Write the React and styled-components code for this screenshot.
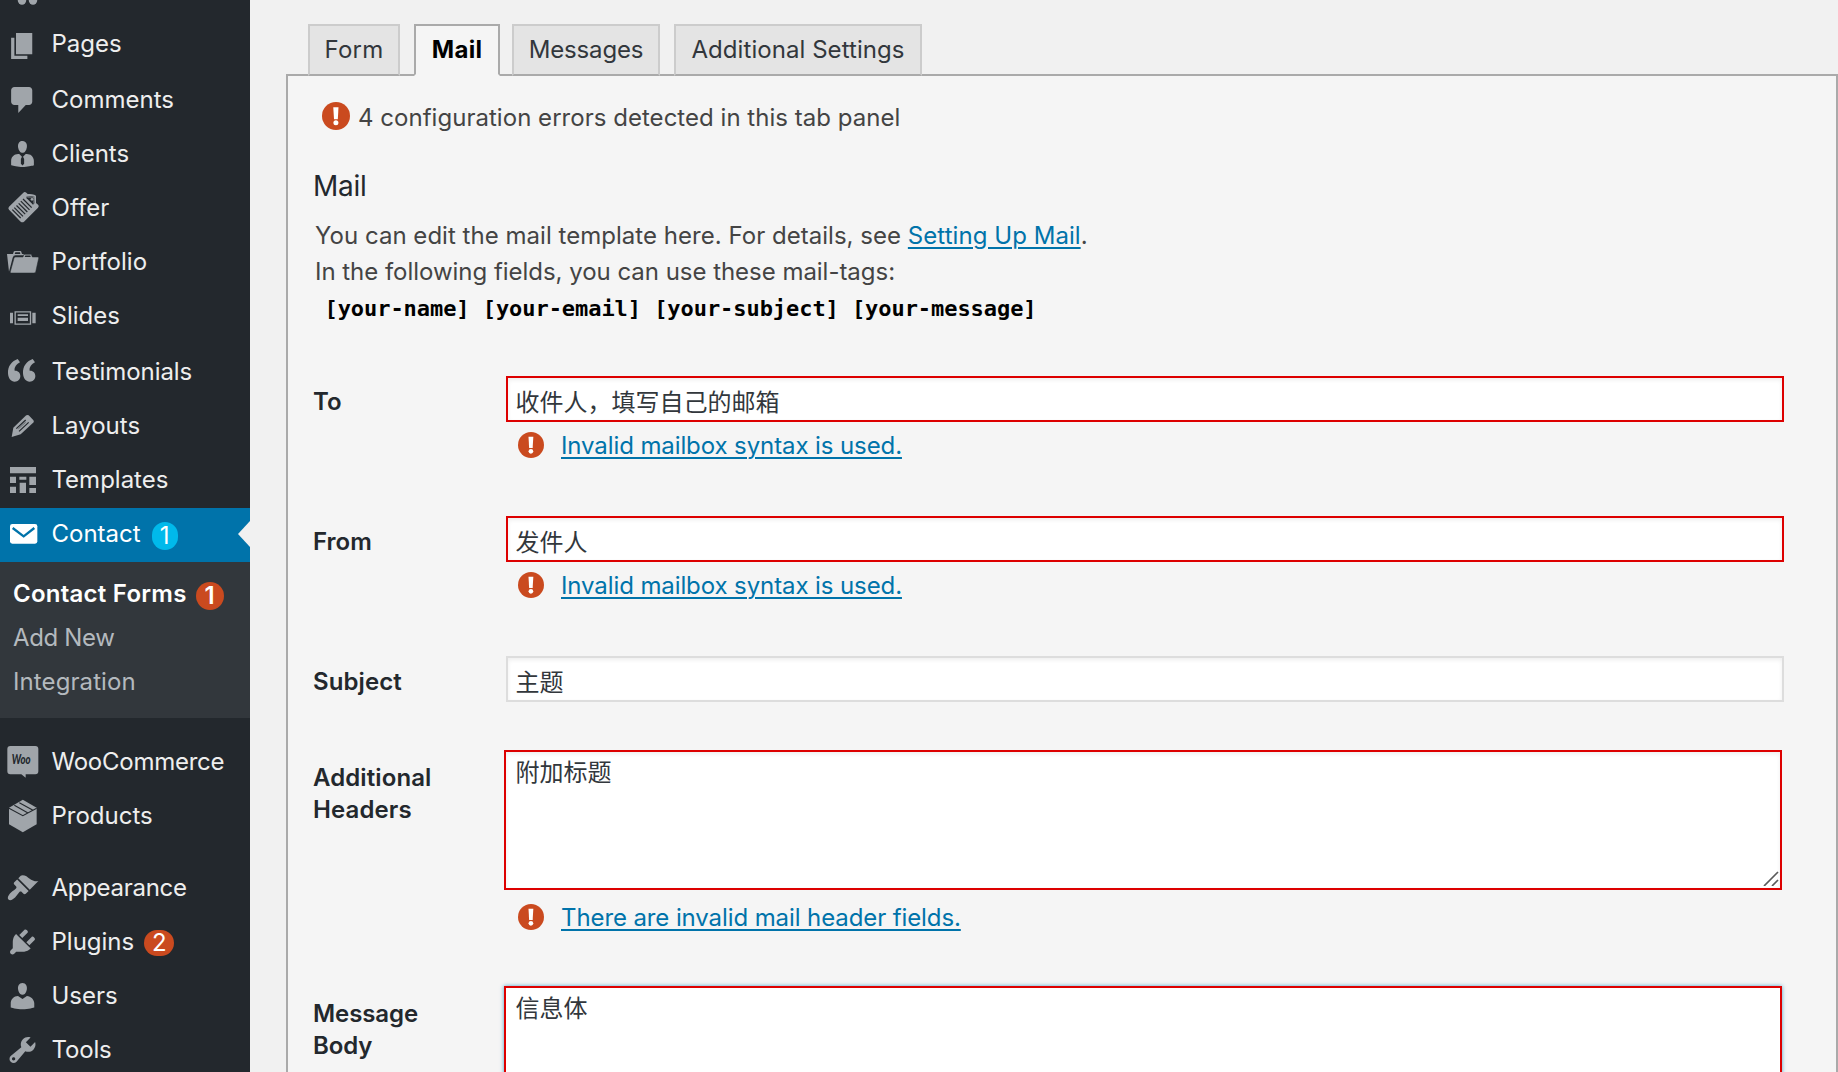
import React from "react";
import styled, { createGlobalStyle, css } from "styled-components";

const GlobalStyle = createGlobalStyle`
  *, *::before, *::after { box-sizing: border-box; }
  html, body { margin: 0; padding: 0; }
  body {
    background: #f1f1f1;
    color: #444;
    font-family: Inter, "Noto Sans CJK SC", sans-serif;
    font-size: 24px;
  }
`;

const Screen = styled.div`
  display: flex;
  width: 1838px;
  height: 1072px;
  overflow: hidden;
  background: #f1f1f1;
`;

/* ---------- sidebar ---------- */

const Sidebar = styled.nav`
  flex: none;
  width: 250px;
  background: #23282d;
  display: flex;
  flex-direction: column;
`;

const ClippedRow = styled.div`
  flex: none;
  display: flex;
  align-items: flex-end;
  height: 18px;
  padding: 0 0 11px 5px;
  overflow: hidden;
  color: #a0a5aa;
`;

const MenuRow = styled.a`
  position: relative;
  flex: none;
  display: flex;
  align-items: flex-start;
  height: ${(p) => (p.$tall ? 56 : 54)}px;
  padding-left: 5px;
  background: ${(p) => (p.$active ? "#0073aa" : "transparent")};
  color: ${(p) => (p.$active ? "#fff" : "#a0a5aa")};
  text-decoration: none;
`;

const MenuIcon = styled.svg`
  flex: none;
  display: block;
  width: 34px;
  height: 34px;
  margin-top: ${(p) => (p.$tall ? 11 : 9)}px;
  overflow: visible;
`;

const MenuText = styled.span`
  margin-left: 12.5px;
  line-height: 51px;
  color: ${(p) => (p.$active ? "#fff" : "#eee")};
  letter-spacing: ${(p) => p.$track || 0}px;
`;

const Badge = styled.span`
  flex: none;
  display: flex;
  align-items: center;
  justify-content: center;
  width: ${(p) => p.$w}px;
  height: ${(p) => p.$h}px;
  margin: ${(p) => p.$top}px 0 0 ${(p) => p.$left}px;
  border-radius: 14px;
  background: ${(p) => (p.$blue ? "#00b9eb" : "#ca4a1f")};
  color: #fff;
  font-weight: ${(p) => (p.$bold ? 600 : 400)};
  line-height: 26px;
`;

const ActiveArrow = styled.span`
  position: absolute;
  right: 0;
  top: 13px;
  border: 13.5px solid transparent;
  border-left-width: 0;
  border-right: 12.5px solid #f1f1f1;
`;

const Submenu = styled.div`
  flex: none;
  display: flex;
  flex-direction: column;
  height: 156px;
  padding: 10px 0 0 13px;
  background: #32373c;
`;

const SubmenuRow = styled.a`
  display: flex;
  height: 44px;
  line-height: 44px;
  color: ${(p) => (p.$current ? "#fff" : "#b4b9be")};
  font-weight: ${(p) => (p.$current ? 600 : 400)};
  letter-spacing: ${(p) => p.$track || 0}px;
`;

const MenuGap = styled.div`
  flex: none;
  height: 18px;
`;

/* ---------- content ---------- */

const Content = styled.main`
  flex: 1;
  display: flex;
  flex-direction: column;
  padding: 24px 0 0 36px;
`;

const Tabs = styled.div`
  position: relative;
  z-index: 1;
  flex: none;
  display: flex;
  height: 52px;
  margin: 0 0 -2px 22px;
`;

const activeTab = css`
  background: #f5f5f5;
  border-color: #aaa #aaa #f5f5f5;
  color: #000;
  font-weight: 700;
`;

const Tab = styled.a`
  display: flex;
  justify-content: center;
  width: ${(p) => p.$width}px;
  margin-right: ${(p) => p.$gap}px;
  border: 2px solid #ccc;
  border-bottom-color: #aaa;
  background: #e4e4e4;
  color: #32373c;
  line-height: 47px;
  letter-spacing: ${(p) => p.$track || 0}px;
  ${(p) => p.$active && activeTab}
`;

const Panel = styled.section`
  flex: none;
  display: flex;
  flex-direction: column;
  height: 1100px;
  padding-left: 25px;
  border: 2px solid #aaa;
  background: #f5f5f5;
`;

const PanelNotice = styled.div`
  display: flex;
  align-items: center;
  gap: 8px;
  height: 28px;
  margin: 26px 0 0 9px;
  color: #444;
`;

const NoticeText = styled.span`
  padding-top: 4px;
  line-height: 28px;
  letter-spacing: 0.03px;
`;

const BangSvg = styled.svg`
  flex: none;
  display: block;
  width: ${(p) => p.$size}px;
  height: ${(p) => p.$size}px;
`;

const Heading = styled.h2`
  margin: 36px 0 0;
  height: 40px;
  line-height: 40px;
  font-size: 28px;
  font-weight: 400;
  letter-spacing: -0.3px;
  color: #23282d;
`;

const Legend = styled.div`
  display: flex;
  flex-direction: column;
  margin-top: 12px;
  padding-left: 2px;
`;

const LegendLine = styled.p`
  margin: 0;
  height: 36px;
  line-height: 36px;
  white-space: pre;
  letter-spacing: ${(p) => p.$track || 0}px;
`;

const Link = styled.a`
  color: #0073aa;
  text-decoration: underline;
  text-decoration-thickness: 2px;
  text-underline-offset: 3px;
  letter-spacing: ${(p) => p.$track || 0}px;
`;

const Tags = styled.div`
  display: flex;
  height: 36px;
  margin-top: 1px;
  padding-left: 9.5px;
  gap: 13.2px;
  color: #000;
  font-family: "DejaVu Sans Mono", monospace;
  font-weight: 700;
  font-size: 22px;
  line-height: 36px;
  letter-spacing: -0.06px;
`;

const Fields = styled.div`
  display: flex;
  flex-direction: column;
  margin-top: 49px;
`;

const FieldRow = styled.div`
  display: grid;
  grid-template-columns: ${(p) => (p.$area ? 191 : 193)}px 1278px;
  align-items: start;
  height: ${(p) => p.$height}px;
`;

const FieldLabel = styled.label`
  padding-top: ${(p) => (p.$area ? 12 : 10)}px;
  color: #23282d;
  font-weight: 600;
  line-height: 32.3px;
  white-space: pre-line;
  letter-spacing: ${(p) => p.$track || 0}px;
`;

const FieldBody = styled.div`
  position: relative;
  display: flex;
  flex-direction: column;
`;

const controlBase = css`
  display: block;
  width: 1278px;
  margin: 0;
  border: 2px solid ${(p) => (p.$invalid ? "#dd0000" : "#ddd")};
  border-radius: 0;
  outline: none;
  background: #fff;
  color: #32373c;
  font-family: Inter, "Noto Sans CJK SC", sans-serif;
  font-size: 24px;
`;

const Input = styled.input`
  ${controlBase}
  height: 46px;
  padding: 2px 7.5px 0;
  box-shadow: inset 0 2px 4px rgba(0, 0, 0, 0.07);
`;

const TextArea = styled.textarea`
  ${controlBase}
  height: ${(p) => p.$height}px;
  padding: 4px 9.5px;
  line-height: 34px;
  resize: none;
  box-shadow: ${(p) =>
    p.$focused ? "0 0 4px rgba(30, 140, 190, 0.8)" : "inset 0 2px 4px rgba(0, 0, 0, 0.07)"};
`;

const Grip = styled.svg`
  position: absolute;
  right: 3px;
  top: 120px;
  width: 16px;
  height: 16px;
`;

const FieldError = styled.div`
  display: flex;
  align-items: center;
  gap: 17px;
  height: 36px;
  margin-top: ${(p) => (p.$area ? 9 : 5)}px;
  padding-left: ${(p) => (p.$area ? 14 : 12)}px;
`;

/* ---------- icons ---------- */

const DASH = "-0.77 -0.46 20.92 20.92";
const CUT = "#23282d";

const icons = {
  pages: { box: DASH, art: <path d="M6 15V2h10v13H6zm-1 1h8v2H3V5h2v11z" /> },
  comments: {
    box: DASH,
    art: <path d="M5 2h9c1.1 0 2 .9 2 2v7c0 1.1-.9 2-2 2h-2l-4.6 5v-5H5c-1.1 0-2-.9-2-2V4c0-1.1.9-2 2-2z" />,
  },
  clients: {
    box: DASH,
    art: (
      <path d="M7.3 6l-.03-.19c-.04-.37-.05-.73-.03-1.08.02-.36.1-.71.25-1.04.14-.32.31-.61.52-.86s.49-.46.83-.6c.34-.15.72-.23 1.13-.23.69 0 1.26.2 1.71.59s.76.87.91 1.44.18 1.16.09 1.78l-.03.19c-.01.09-.05.25-.11.48-.05.24-.12.47-.2.69-.08.21-.19.45-.34.72-.14.27-.3.49-.47.69-.18.19-.4.34-.67.48-.27.13-.55.19-.86.19s-.59-.06-.87-.19c-.26-.13-.49-.29-.67-.5-.18-.2-.34-.42-.49-.66-.15-.25-.26-.49-.34-.73-.09-.25-.16-.47-.21-.67-.06-.21-.1-.37-.12-.5zm9.2 6.24c.41.7.5 1.41.5 2.14v2.49c0 .03-.12.08-.29.13-.18.04-.42.13-.97.27-.55.12-1.1.24-1.65.34s-1.19.19-1.95.27c-.75.08-1.46.12-2.13.12-.68 0-1.39-.04-2.14-.12-.75-.07-1.4-.17-1.98-.27-.58-.11-1.08-.23-1.56-.34-.49-.11-.8-.21-1.06-.29L3 16.87v-2.49c0-.75.07-1.46.46-2.15s.81-1.25 1.5-1.68C5.66 10.12 7.19 10 8 10l1.67 1.67L9 13v3l1.02 1.08L11 16v-3l-.68-1.33L11.97 10c.77 0 2.2.07 2.9.52.71.45 1.21 1.02 1.63 1.72z" />
    ),
  },
  offer: {
    box: "15 573 102 102",
    art: (
      <>
        <path
          d="M70 578 Q74 574 79 578 L83 582 C90 582 102 583 108 587 L108 609 L115 615 Q118 619 114 623 L72 665 Q67 669 62 665 L27 629 Q23 624 27 620 Z"
          fill="currentColor"
        />
        <g stroke={CUT} strokeWidth="3.8" fill="none">
          <path d="M69 597 L95 623" />
          <path d="M62.500 603.500 L88.500 629.500" />
          <path d="M56 610 L82 636" />
          <path d="M49.500 616.500 L75.500 642.500" />
          <path d="M43 623 L69 649" />
          <path d="M37 629 L62 654" />
        </g>
        <path d="M79 590 C88 587 99 587 103 590 L104 609 L99 614 L80 595 Z" fill={CUT} />
        <path d="M82 591 L102 591 L102 611" stroke="currentColor" strokeWidth="2.500" fill="none" />
        <circle cx="96" cy="598" r="4" fill="currentColor" />
      </>
    ),
  },
  portfolio: {
    box: "15 735 102 102",
    art: (
      <>
        <path d="M21 762 H39 L41 755 Q42 753 45 753 H61 Q64 753 64 756 L66 762 H71 L71 766 H47 Q40 766 38 773 L27 815 Z" />
        <path d="M44 762 L46 757 H60 L61 762 Z" fill={CUT} />
        <path d="M47 771 H69 L71 765 Q72 763 75 763 H92 Q95 763 95 766 L97 771 H113 Q117 771 116 775 L107 816 Q106 819 102 819 H34 Q29 819 31 815 L42 775 Q43 771 47 771 Z" stroke={CUT} strokeWidth="1.5" />
        <path d="M74 771 L76 766.5 H91 L92 771 Z" fill={CUT} />
      </>
    ),
  },
  slides: {
    box: "15 63 102 102",
    art: (
      <>
        <path d="M30 98h9v32h-9zM97 98h10v32H97z" />
        <path d="M45.500 95.500h46v37h-46z" fill="none" stroke="currentColor" strokeWidth="4" />
        <path d="M53 103h31v5H53zM53 113h31v10H53z" />
      </>
    ),
  },
  quote: {
    box: "15 225 102 102",
    art: (
      <>
        <path d="M53 237 C36 243 23 258 24 280 C25 296 33 305 44 305 C54 305 61 298 61 288 C61 278 54 271 44 272 C42 262 50 252 60 247 Z" />
        <path d="M98 237 C81 243 68 258 69 280 C70 296 78 305 89 305 C99 305 106 298 106 288 C106 278 99 271 89 272 C87 262 95 252 105 247 Z" />
      </>
    ),
  },
  pencil: {
    box: "15 387 102 102",
    art: (
      <>
        <path d="M77 407 Q81 403 86 406 L99 419 Q103 423 101 427 L62 463 L35 471 L40 443 Z" />
        <path d="M49 446 L77 420 M57 454 L86 427" stroke={CUT} strokeWidth="3.600" />
        <path d="M55 446.500 L77 426.500" stroke={CUT} strokeWidth="1.500" />
      </>
    ),
  },
  templates: {
    box: "15 549 102 102",
    art: (
      <path d="M30 561h78v19H30zM30 590h18v19H30zM58 590h21v9H58zM88 590h20v25H88zM30 620h18v19H30zM59 608h19v31H59zM88 624h20v15H88z" />
    ),
  },
  mail: {
    box: "15 711 102 102",
    art: (
      <>
        <rect x="30" y="732" width="82" height="59" rx="7" />
        <path d="M38 744 L71 769 L103 744" fill="none" stroke="#0073aa" strokeWidth="7" strokeLinejoin="miter" />
      </>
    ),
  },
  woo: {
    box: "15 735 102 102",
    art: (
      <>
        <path d="M31 738 H106 Q115 738 115 747 V814 Q115 823 106 823 H77 V833 L64 823 H31 Q22 823 22 814 V747 Q22 738 31 738 Z" />
        <text
          transform="translate(35 793) scale(0.78 1)"
          fill={CUT}
          fontFamily="Lato, sans-serif"
          fontWeight="900"
          fontStyle="italic"
          fontSize="37"
        >
          Woo
        </text>
      </>
    ),
  },
  products: {
    box: "15 51 102 102",
    art: (
      <>
        <path d="M68.500 53 L110 77 V127 L68.500 151 L27 127 V77 Z" />
        <path d="M27 79 L68.500 101 L110 79 M43 70 L84 93 M58 62 L99 85" fill="none" stroke={CUT} strokeWidth="3.2" />
      </>
    ),
  },
  appearance: {
    box: DASH,
    art: (
      <path d="M14.48 11.06L7.41 3.99l1.5-1.5c.5-.56 2.3-.47 3.51.32 1.21.8 1.43 1.28 2.91 2.1 1.18.64 2.45 1.26 4.45.85zm-.71.71L6.7 4.7 4.93 6.47c-.39.39-.39 1.02 0 1.41l1.06 1.06c.39.39.39 1.03 0 1.42-.6.6-1.43 1.11-2.21 1.69-.35.26-.7.53-1.01.84C1.43 14.23.4 16.08 1.4 17.07c.99 1 2.84-.03 4.18-1.36.31-.31.58-.66.85-1.02.57-.78 1.08-1.61 1.69-2.21.39-.39 1.02-.39 1.41 0l1.06 1.06c.39.39 1.02.39 1.41 0z" />
    ),
  },
  plugins: {
    box: DASH,
    art: (
      <path d="M13.11 4.36L9.87 7.6 8 5.73l3.24-3.24c.35-.34 1.05-.2 1.56.32.52.51.66 1.21.31 1.55zm-8 1.77l.91-1.12 9.01 9.01-1.19.84c-.71.71-2.63 1.16-3.82 1.16H6.14L4.9 17.26c-.59.59-1.54.59-2.12 0-.59-.58-.59-1.53 0-2.12l1.24-1.24v-3.88c0-1.13.4-3.19 1.09-3.89zm7.26 3.97l3.24-3.24c.34-.35 1.04-.21 1.55.31.52.51.66 1.21.31 1.55l-3.24 3.25z" />
    ),
  },
  users: {
    box: DASH,
    art: (
      <path d="M10 9.25c-2.27 0-2.73-3.44-2.73-3.44C7 4.02 7.82 2 9.97 2c2.16 0 2.98 2.02 2.71 3.81 0 0-.41 3.44-2.68 3.44zm0 2.57L12.72 10c2.39 0 4.52 2.33 4.52 4.53v2.49s-3.65 1.13-7.24 1.13c-3.65 0-7.24-1.13-7.24-1.13v-2.49c0-2.25 1.94-4.48 4.47-4.48z" />
    ),
  },
  tools: {
    box: DASH,
    art: (
      <path d="M16.68 9.77c-1.34 1.34-3.3 1.67-4.95.99l-5.41 6.52c-.99.99-2.59.99-3.58 0s-.99-2.59 0-3.57l6.52-5.42c-.68-1.65-.35-3.61.99-4.95 1.28-1.28 3.12-1.62 4.72-1.06l-2.89 2.89 2.82 2.82 2.86-2.87c.53 1.58.18 3.39-1.08 4.65zM3.81 16.21c.4.39 1.04.39 1.43 0 .4-.4.4-1.04 0-1.43-.39-.4-1.03-.4-1.43 0-.39.39-.39 1.03 0 1.43z" />
    ),
  },
};

function Icon({ name, tall }) {
  const { box, art } = icons[name];
  return (
    <MenuIcon viewBox={box} $tall={tall} fill="currentColor" aria-hidden="true">
      {art}
    </MenuIcon>
  );
}

function Bang({ size }) {
  return (
    <BangSvg $size={size} viewBox="0 0 28 28" aria-hidden="true">
      <circle cx="14" cy="14" r="14" fill="#ca4a1f" />
      <path d="M11.300 5.200 h5.200 l-.7 12 h-3.800 z" fill="#fff" />
      <circle cx="13.900" cy="20.800" r="2.500" fill="#fff" />
    </BangSvg>
  );
}

function MenuItem({ icon, label, tall, active, track, children }) {
  return (
    <MenuRow $tall={tall} $active={active}>
      <Icon name={icon} tall={tall} />
      <MenuText $active={active} $track={track}>
        {label}
      </MenuText>
      {children}
    </MenuRow>
  );
}

function Field({ label, value, height, area, areaHeight, invalid, focused, grip, error, track }) {
  return (
    <FieldRow $height={height} $area={area}>
      <FieldLabel $area={area} $track={track}>
        {label}
      </FieldLabel>
      <FieldBody>
        {area ? (
          <TextArea readOnly value={value} $height={areaHeight} $invalid={invalid} $focused={focused} />
        ) : (
          <Input readOnly value={value} $invalid={invalid} />
        )}
        {grip && (
          <Grip viewBox="0 0 16 16" aria-hidden="true">
            <path d="M1 16 L15 2 M9 16 L15 10" stroke="#5a5a5a" strokeWidth="1.7" fill="none" />
          </Grip>
        )}
        {error && (
          <FieldError $area={area}>
            <Bang size={26} />
            <Link $track={-0.1}>{error}</Link>
          </FieldError>
        )}
      </FieldBody>
    </FieldRow>
  );
}

export default function App() {
  return (
    <Screen>
      <GlobalStyle />
      <Sidebar>
        <ClippedRow>
          <svg width="34" height="10" viewBox="0 0 34 10" fill="currentColor" aria-hidden="true">
            <circle cx="17" cy="3.500" r="4.200" />
            <circle cx="28" cy="3.500" r="4.200" />
          </svg>
        </ClippedRow>
        <MenuItem icon="pages" label="Pages" tall />
        <MenuItem icon="comments" label="Comments" />
        <MenuItem icon="clients" label="Clients" />
        <MenuItem icon="offer" label="Offer" track={0.1} />
        <MenuItem icon="portfolio" label="Portfolio" track={0.1} />
        <MenuItem icon="slides" label="Slides" tall />
        <MenuItem icon="quote" label="Testimonials" track={-0.05} />
        <MenuItem icon="pencil" label="Layouts" />
        <MenuItem icon="templates" label="Templates" />
        <MenuItem icon="mail" label="Contact" active>
          <Badge $blue $w={26} $h={28} $top={14} $left={11}>
            1
          </Badge>
          <ActiveArrow />
        </MenuItem>
        <Submenu>
          <SubmenuRow $current $track={0.25}>
            Contact Forms
            <Badge $bold $w={28} $h={28} $top={10} $left={9}>
              1
            </Badge>
          </SubmenuRow>
          <SubmenuRow $track={-0.35}>Add New</SubmenuRow>
          <SubmenuRow $track={0.1}>Integration</SubmenuRow>
        </Submenu>
        <MenuGap />
        <MenuItem icon="woo" label="WooCommerce" track={-0.25} />
        <MenuItem icon="products" label="Products" />
        <MenuGap />
        <MenuItem icon="appearance" label="Appearance" track={-0.28} />
        <MenuItem icon="plugins" label="Plugins">
          <Badge $w={30} $h={26} $top={14} $left={10}>
            2
          </Badge>
        </MenuItem>
        <MenuItem icon="users" label="Users" />
        <MenuItem icon="tools" label="Tools" track={-0.15} />
      </Sidebar>
      <Content>
        <Tabs>
          <Tab $width={92} $gap={14} $track={0.3}>
            Form
          </Tab>
          <Tab $width={86} $gap={12} $active $track={0.25}>
            Mail
          </Tab>
          <Tab $width={148} $gap={14} $track={-0.15}>
            Messages
          </Tab>
          <Tab $width={248} $gap={0} $track={0.06}>
            Additional Settings
          </Tab>
        </Tabs>
        <Panel>
          <PanelNotice>
            <Bang size={28} />
            <NoticeText>4 configuration errors detected in this tab panel</NoticeText>
          </PanelNotice>
          <Heading>Mail</Heading>
          <Legend>
            <LegendLine $track={0.03}>
              You can edit the mail template here. For details, see <Link $track={0.05}>Setting Up Mail</Link>.
            </LegendLine>
            <LegendLine $track={-0.03}>In the following fields, you can use these mail-tags:</LegendLine>
            <Tags>
              <span>[your-name]</span>
              <span>[your-email]</span>
              <span>[your-subject]</span>
              <span>[your-message]</span>
            </Tags>
          </Legend>
          <Fields>
            <Field label="To" value="收件人，填写自己的邮箱" height={140} invalid error="Invalid mailbox syntax is used." />
            <Field label="From" value="发件人" height={140} invalid error="Invalid mailbox syntax is used." />
            <Field label="Subject" value="主题" height={94} track={0.1} />
            <Field
              label={"Additional\nHeaders"}
              value="附加标题"
              height={236}
              area
              areaHeight={140}
              invalid
              grip
              error="There are invalid mail header fields."
              track={0.1}
            />
            <Field label={"Message\nBody"} value="信息体" height={260} area areaHeight={240} invalid focused track={-0.1} />
          </Fields>
        </Panel>
      </Content>
    </Screen>
  );
}
